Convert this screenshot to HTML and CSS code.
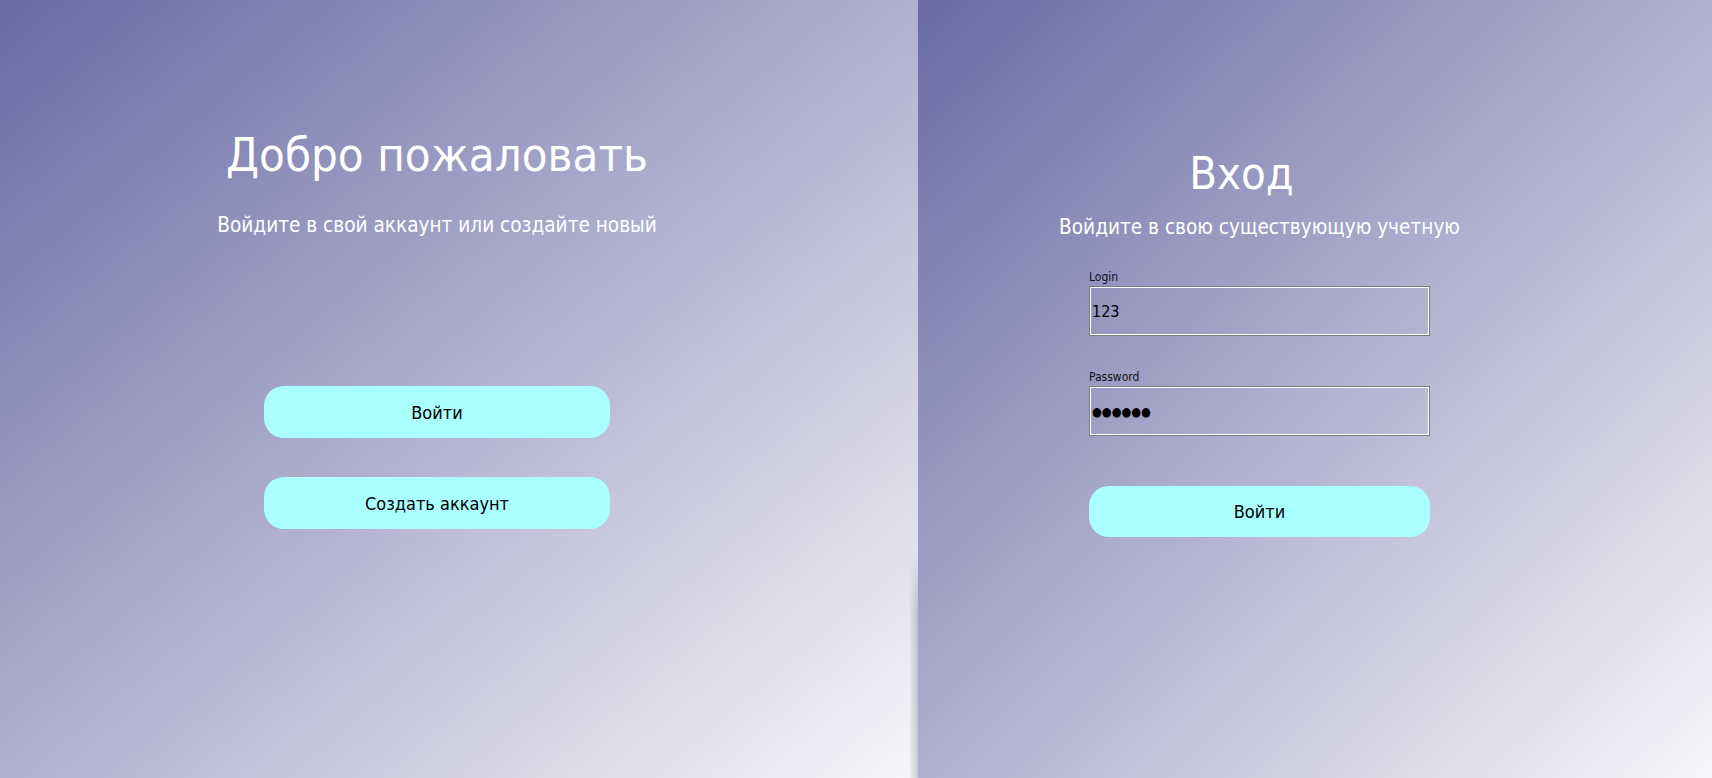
FILE: index.html
```html
<!DOCTYPE html>
<html lang="ru">
<head>
<meta charset="utf-8">
<title>Вход</title>
<link rel="stylesheet" href="styles.css">
</head>
<body>
<div class="app">
  <section class="panel welcome">
    <h1 class="title welcome-title">Добро пожаловать</h1>
    <p class="subtitle welcome-subtitle">Войдите в свой аккаунт или создайте новый</p>
    <div class="actions">
      <button class="pill" type="button">Войти</button>
      <button class="pill" type="button">Создать аккаунт</button>
    </div>
  </section>
  <section class="panel login">
    <div class="login-inner">
      <h2 class="title login-title">Вход</h2>
      <p class="subtitle login-subtitle">Войдите в свою существующую учетную</p>
      <form class="form">
        <label class="field">
          <span class="field-label">Login</span>
          <input class="field-input" type="text" value="123">
        </label>
        <label class="field field-password">
          <span class="field-label">Password</span>
          <input class="field-input field-dots" type="text" value="●●●●●●">
        </label>
        <button class="pill submit" type="button">Войти</button>
      </form>
    </div>
  </section>
</div>
</body>
</html>
```

FILE: styles.css
```css
html, body {
  margin: 0;
  padding: 0;
}

body {
  font-family: "DejaVu Sans", "Liberation Sans", sans-serif;
  font-stretch: condensed;
  overflow: hidden;
}

.app {
  display: flex;
  width: 1712px;
  height: 778px;
}

.panel {
  position: relative;
  box-sizing: border-box;
  height: 778px;
  background: linear-gradient(to bottom right, #6a6aa4 0%, #f6f6fa 100%);
}

.title {
  margin: 0;
  font-weight: normal;
  font-size: 47px;
  color: #ffffff;
  white-space: nowrap;
}

.subtitle {
  margin: 0;
  font-size: 20.6px;
  line-height: 24px;
  color: #ffffff;
  white-space: nowrap;
}

/* left panel */
.welcome {
  width: 918px;
  flex: none;
  display: flex;
  flex-direction: column;
  align-items: center;
  padding: 126px 44px 0 0;
}

.welcome-title {
  line-height: 58px;
}

.welcome-subtitle {
  margin-top: 29px;
}

.actions {
  margin-top: 149px;
  display: flex;
  flex-direction: column;
  gap: 39px;
}

.pill {
  width: 346px;
  height: 52px;
  border: none;
  border-radius: 20px;
  background: #aaffff;
  color: #000000;
  font-family: inherit;
  font-stretch: condensed;
  font-size: 18px;
  padding: 0;
  cursor: pointer;
}

/* right panel */
.login {
  flex: 1;
  padding: 150px 0 0 171px;
}

.login::before {
  content: "";
  position: absolute;
  left: -9px;
  bottom: 0;
  width: 9px;
  height: 225px;
  background: linear-gradient(to right, rgba(0, 0, 0, 0) 0%, rgba(40, 40, 60, 0.22) 100%);
  -webkit-mask-image: linear-gradient(to bottom, transparent 0, #000 60px);
  mask-image: linear-gradient(to bottom, transparent 0, #000 60px);
}

.login-inner {
  width: 341px;
  display: flex;
  flex-direction: column;
  align-items: center;
}

.login-title {
  font-size: 45px;
  line-height: 48px;
  padding-right: 36px;
}

.login-subtitle {
  margin-top: 17px;
}

.form {
  width: 341px;
  margin-top: 31px;
  display: flex;
  flex-direction: column;
}

.field {
  display: flex;
  flex-direction: column;
  gap: 2px;
}

.field-password {
  margin-top: 34px;
}

.field-label {
  font-size: 12px;
  line-height: 14px;
  color: #111111;
}

.field-input {
  box-sizing: border-box;
  width: 341px;
  height: 50px;
  margin: 0;
  padding: 0 2px;
  border: 1px solid #7d7d7d;
  box-shadow: inset 0 0 0 1px #ffffff;
  background: transparent;
  font-family: inherit;
  font-stretch: condensed;
  font-size: 16px;
  color: #000000;
  outline: none;
}

.field-dots {
  font-size: 12.5px;
  letter-spacing: 0;
}

.submit {
  width: 341px;
  height: 51px;
  margin-top: 50px;
}
```
